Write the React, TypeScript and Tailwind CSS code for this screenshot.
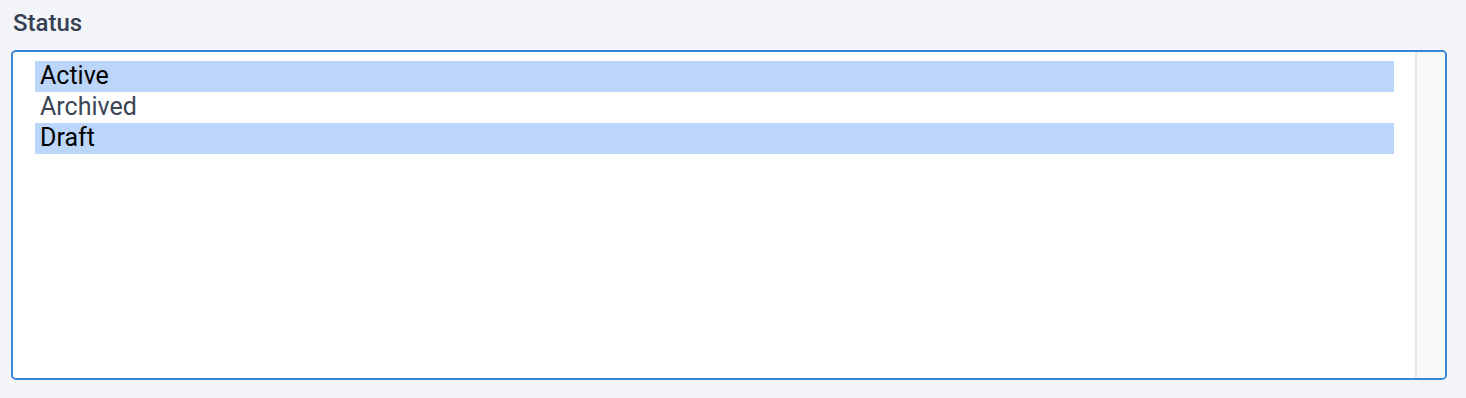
import React from 'react';

const options = [
  { label: 'Active', selected: true },
  { label: 'Archived', selected: false },
  { label: 'Draft', selected: true },
];

const App: React.FC = () => {
  return (
    <div className="min-h-[398px] w-full bg-[#f4f5f9] pl-[11px] pr-[19px] pt-[7px] font-['Roboto',sans-serif]">
      {/* Label */}
      <div className="pl-[2px] text-[24px] leading-[32px] font-medium text-[#364153]">Status</div>

      {/* Multi-select listbox */}
      <div className="mt-[11px] flex h-[330px] w-[1436px] overflow-hidden rounded-[5px] border-2 border-[#3a86d6] bg-white">
        <div className="flex-1 pl-[22px] pr-[21px] pt-[9px]">
          {options.map((o) => (
            <div
              key={o.label}
              className={`h-[31px] pl-[5px] text-[25px] leading-[30px] ${
                o.selected ? 'bg-[#bbd6f9] text-black' : 'text-[#3b4555]'
              }`}
            >
              {o.label}
            </div>
          ))}
        </div>

        {/* Scrollbar track */}
        <div className="w-[30px] border-l-2 border-[#e7e7e7] bg-[#f8f8f8]" />
      </div>
    </div>
  );
};

export default App;
